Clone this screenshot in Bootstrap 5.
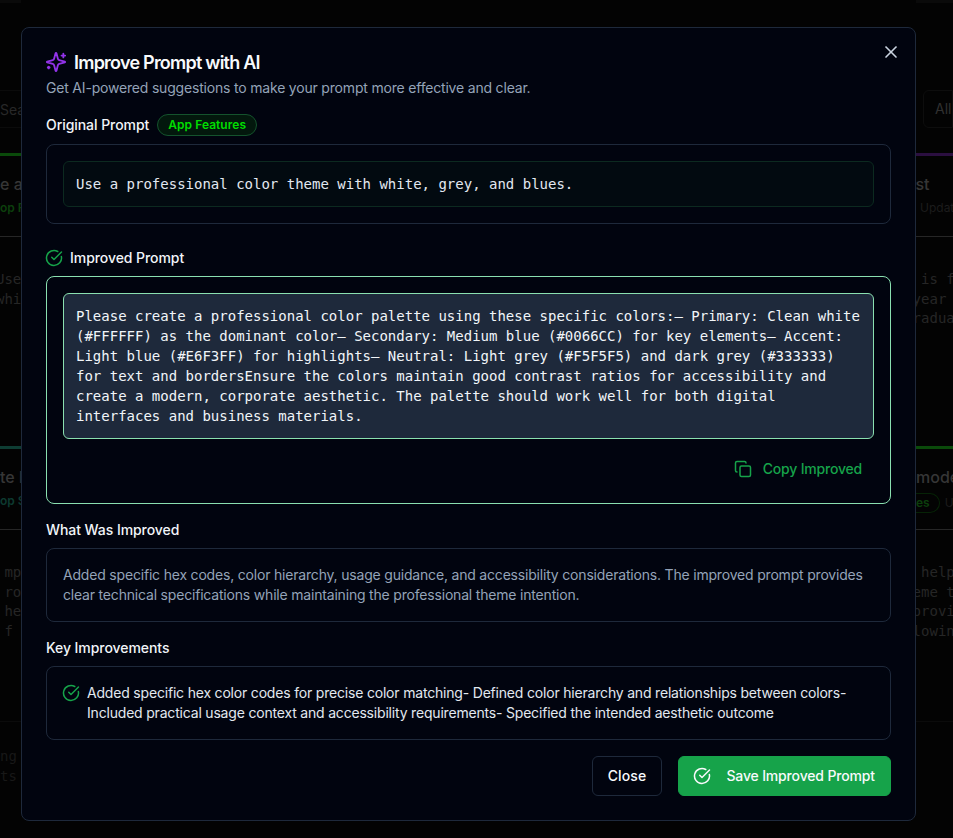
<!DOCTYPE html>
<html lang="en">
<head>
<meta charset="utf-8">
<title>Improve Prompt with AI</title>
<link href="https://cdn.jsdelivr.net/npm/bootstrap@5.3.0/dist/css/bootstrap.min.css" rel="stylesheet">
<style>
html,body{height:100%;overflow:hidden}
body{background:#000;font-family:Inter,"Noto Sans",sans-serif;font-size:14px;line-height:20px;color:#f8fafc}
.back-page{display:grid;grid-template-columns:21px 1fr 37px;height:838px;overflow:hidden;background:#030303;color:#2c2c2c;white-space:nowrap}
.back-top{height:3px;background:#0a0a0a}
.back-search{height:38px;margin-top:87px;line-height:37px;border-top:1px solid #0b0b0b;border-bottom:1px solid #0b0b0b;color:#282828}
.back-all{height:38px;margin:87px 0 0 7px;padding-left:11px;line-height:36px;border:1px solid #0d0d0d;border-radius:6px 0 0 6px;color:#303030}
.back-bar{height:3px;margin-top:25px}
.back-bar.second{margin-top:0}
.bar-green{background:#0a4a0a}.bar-teal{background:#0e3d33}.bar-purple{background:#2b0f40}
.back-head{height:81px;padding-top:14px;border-bottom:1px solid #262626}
.back-name{font-size:16px;font-weight:500;line-height:28px;color:#363636}
.back-name.shift-in{margin-left:-10px}
.back-sub{font-size:12px;line-height:16px;margin-top:2px;color:#1c1c1c}
.back-sub.tinted{color:#0c3f0c;font-weight:600}
.back-sub.teal{color:#0d3a30;font-weight:600}
.back-sub.inset{padding-left:4px}
.back-ring{display:inline-block;padding:1px 9px 1px 0;border:1px solid #062306;border-left:0;border-radius:0 11px 11px 0}
.back-u{color:#1c1c1c;font-weight:400;margin-left:5px}
.back-body{padding-top:33px;font-family:"DejaVu Sans Mono","Liberation Mono",monospace;color:#262626;line-height:19.7px;white-space:pre}
.back-body.tall{height:209px}
.back-body.short{height:192px;border-bottom:1px solid #0b0b0b}
.back-body.left{margin-left:-4px}
.back-body.right{margin-left:-3.4px}
.back-foot{padding-top:24px;font-family:"DejaVu Sans Mono","Liberation Mono",monospace;color:#181818;line-height:20px;white-space:pre}
.sheet{position:fixed;top:27px;left:21px;width:895px;height:794px;margin:0;background:#01040f;border:1px solid #1e293b;border-radius:8px;padding:24px;z-index:1055;letter-spacing:-.19px}
.sheet-x{position:absolute;top:14px;right:14px;width:20px;height:20px;padding:0;border:0;background:none;color:#cbd5e1;display:flex}
.sheet-x .ic{width:20px;height:20px}
.sheet-title{font-size:18px;line-height:21px;font-weight:600;letter-spacing:-.77px;color:#f8fafc;margin:0}
.sheet-sub{color:#94a3b8;margin:5px 0 16px}
.spark-ic{width:22px!important;height:22px!important;margin:-1px;color:#9333ea}
.fld-label{font-weight:500;color:#f1f5f9;letter-spacing:-.06px}
.topic-pill{background:#03180d;border:1px solid #14532d;color:#00dd00;font-size:12px;font-weight:600;line-height:16px;padding:2px 10px;border-radius:50rem;letter-spacing:.05px}
.panel{background:transparent;border:1px solid #1e293b;border-radius:8px;padding:16px;color:#e2e8f0}
.panel-good{border-color:#8ae0b0}
.code-orig,.code-good{font-family:"DejaVu Sans Mono","Liberation Mono",monospace;font-size:14px;line-height:20px;padding:12px;border-radius:6px;letter-spacing:0}
.code-orig{background:#020a10;border:1px solid #0c2a20;color:#e2e8f0}
.code-good{background:#1e293b;border:1px solid #8ae0b0;color:#f1f5f9}
.ic{width:18px;height:18px;flex:none;fill:none;stroke:currentColor;stroke-width:2;stroke-linecap:round;stroke-linejoin:round}
.ic-good{color:#16a34a}
.ic-head{margin:0 -1px}
.ic-item{margin:1px -1px 0 -1px}
.copy-btn{color:#16a34a;font-weight:500;font-size:14px;padding:8px 12px;height:36px;line-height:20px;border:0;background:none;border-radius:6px;letter-spacing:-.2px}
.copy-ic{margin-right:3px}
.muted-text{color:#94a3b8}
.act-close,.act-save{height:40px;font-size:14px;font-weight:500;line-height:20px;padding:9px 15px;border-radius:6px}
.act-close{background:#01040f;border:1px solid #1e293b;color:#f8fafc;letter-spacing:.15px}
.act-save{background:#16a34a;border:1px solid #16a34a;color:#f8fafc;letter-spacing:-.15px}
.save-ic{margin:0 7px 0 -1px}
</style>
</head>
<body>
<div class="back-page" aria-hidden="true">
  <div>
    <div class="back-top"></div>
    <div class="back-search">Sea</div>
    <div class="back-bar bar-green"></div>
    <div class="back-head"><div class="back-name">e a</div><div class="back-sub tinted">op F</div></div>
    <div class="back-body tall left">Use
whit</div>
    <div class="back-bar second bar-teal"></div>
    <div class="back-head"><div class="back-name">te l</div><div class="back-sub teal">op S</div></div>
    <div class="back-body short left"> mp
 ro
 hes
 f S</div>
    <div class="back-foot">ng
ts</div>
  </div>
  <div></div>
  <div>
    <div class="back-top"></div>
    <div class="back-all">All</div>
    <div class="back-bar bar-purple"></div>
    <div class="back-head"><div class="back-name shift-in">est</div><div class="back-sub inset">Updat</div></div>
    <div class="back-body tall right"> is f
year
radua</div>
    <div class="back-bar second bar-green"></div>
    <div class="back-head"><div class="back-name">mode</div><div class="back-sub tinted"><span class="back-ring">es</span><span class="back-u">U</span></div></div>
    <div class="back-body short right"> help
eme t
provi
lowin</div>
  </div>
</div>

<div class="sheet" role="dialog">
  <button class="sheet-x" type="button" aria-label="Close"><svg class="ic" viewBox="0 0 24 24"><path d="M18 6 6 18"/><path d="m6 6 12 12"/></svg></button>

  <div class="d-flex align-items-start gap-2">
    <svg class="ic spark-ic" viewBox="0 0 24 24"><path d="M9.937 15.5A2 2 0 0 0 8.5 14.063l-6.135-1.582a.5.5 0 0 1 0-.962L8.5 9.936A2 2 0 0 0 9.937 8.5l1.582-6.135a.5.5 0 0 1 .963 0L14.063 8.5A2 2 0 0 0 15.5 9.937l6.135 1.581a.5.5 0 0 1 0 .964L15.5 14.063a2 2 0 0 0-1.437 1.437l-1.582 6.135a.5.5 0 0 1-.963 0z"/><path d="M20 3v4"/><path d="M22 5h-4"/><path d="M4 17v2"/><path d="M5 18H3"/></svg>
    <h2 class="sheet-title">Improve Prompt with AI</h2>
  </div>
  <p class="sheet-sub">Get AI-powered suggestions to make your prompt more effective and clear.</p>

  <div class="d-flex align-items-center gap-2 mb-2">
    <span class="fld-label">Original Prompt</span>
    <span class="topic-pill">App Features</span>
  </div>
  <div class="panel mb-4">
    <div class="code-orig">Use a professional color theme with white, grey, and blues.</div>
  </div>

  <div class="d-flex align-items-center gap-2 mb-2">
    <svg class="ic ic-good ic-head" viewBox="0 0 24 24"><path d="M21.801 10A10 10 0 1 1 17 3.335"/><path d="m9 11 3 3L22 4"/></svg>
    <span class="fld-label">Improved Prompt</span>
  </div>
  <div class="panel panel-good mb-3">
    <div class="code-good">Please create a professional color palette using these specific colors:– Primary: Clean white (#FFFFFF) as the dominant color– Secondary: Medium blue (#0066CC) for key elements– Accent: Light blue (#E6F3FF) for highlights– Neutral: Light grey (#F5F5F5) and dark grey (#333333) for text and bordersEnsure the colors maintain good contrast ratios for accessibility and create a modern, corporate aesthetic. The palette should work well for both digital interfaces and business materials.</div>
    <div class="d-flex justify-content-end mt-2 pt-1">
      <button class="copy-btn d-inline-flex align-items-center gap-2" type="button">
        <svg class="ic copy-ic" viewBox="0 0 24 24"><rect x="8" y="8" width="14" height="14" rx="2" ry="2"/><path d="M4 16c-1.1 0-2-.9-2-2V4c0-1.1.9-2 2-2h10c1.1 0 2 .9 2 2"/></svg>
        Copy Improved
      </button>
    </div>
  </div>

  <div class="fld-label mb-2">What Was Improved</div>
  <div class="panel muted-text mb-3">Added specific hex codes, color hierarchy, usage guidance, and accessibility considerations. The improved prompt provides clear technical specifications while maintaining the professional theme intention.</div>

  <div class="fld-label mb-2">Key Improvements</div>
  <div class="panel mb-3 d-flex gap-2">
    <svg class="ic ic-good ic-item" viewBox="0 0 24 24"><path d="M21.801 10A10 10 0 1 1 17 3.335"/><path d="m9 11 3 3L22 4"/></svg>
    <div>Added specific hex color codes for precise color matching- Defined color hierarchy and relationships between colors- Included practical usage context and accessibility requirements- Specified the intended aesthetic outcome</div>
  </div>

  <div class="d-flex justify-content-end gap-3">
    <button class="act-close" type="button">Close</button>
    <button class="act-save d-inline-flex align-items-center gap-2" type="button">
      <svg class="ic save-ic" viewBox="0 0 24 24"><path d="M21.801 10A10 10 0 1 1 17 3.335"/><path d="m9 11 3 3L22 4"/></svg>
      Save Improved Prompt
    </button>
  </div>
</div>
<script src="https://cdn.jsdelivr.net/npm/bootstrap@5.3.0/dist/js/bootstrap.bundle.min.js"></script>
</body>
</html>
